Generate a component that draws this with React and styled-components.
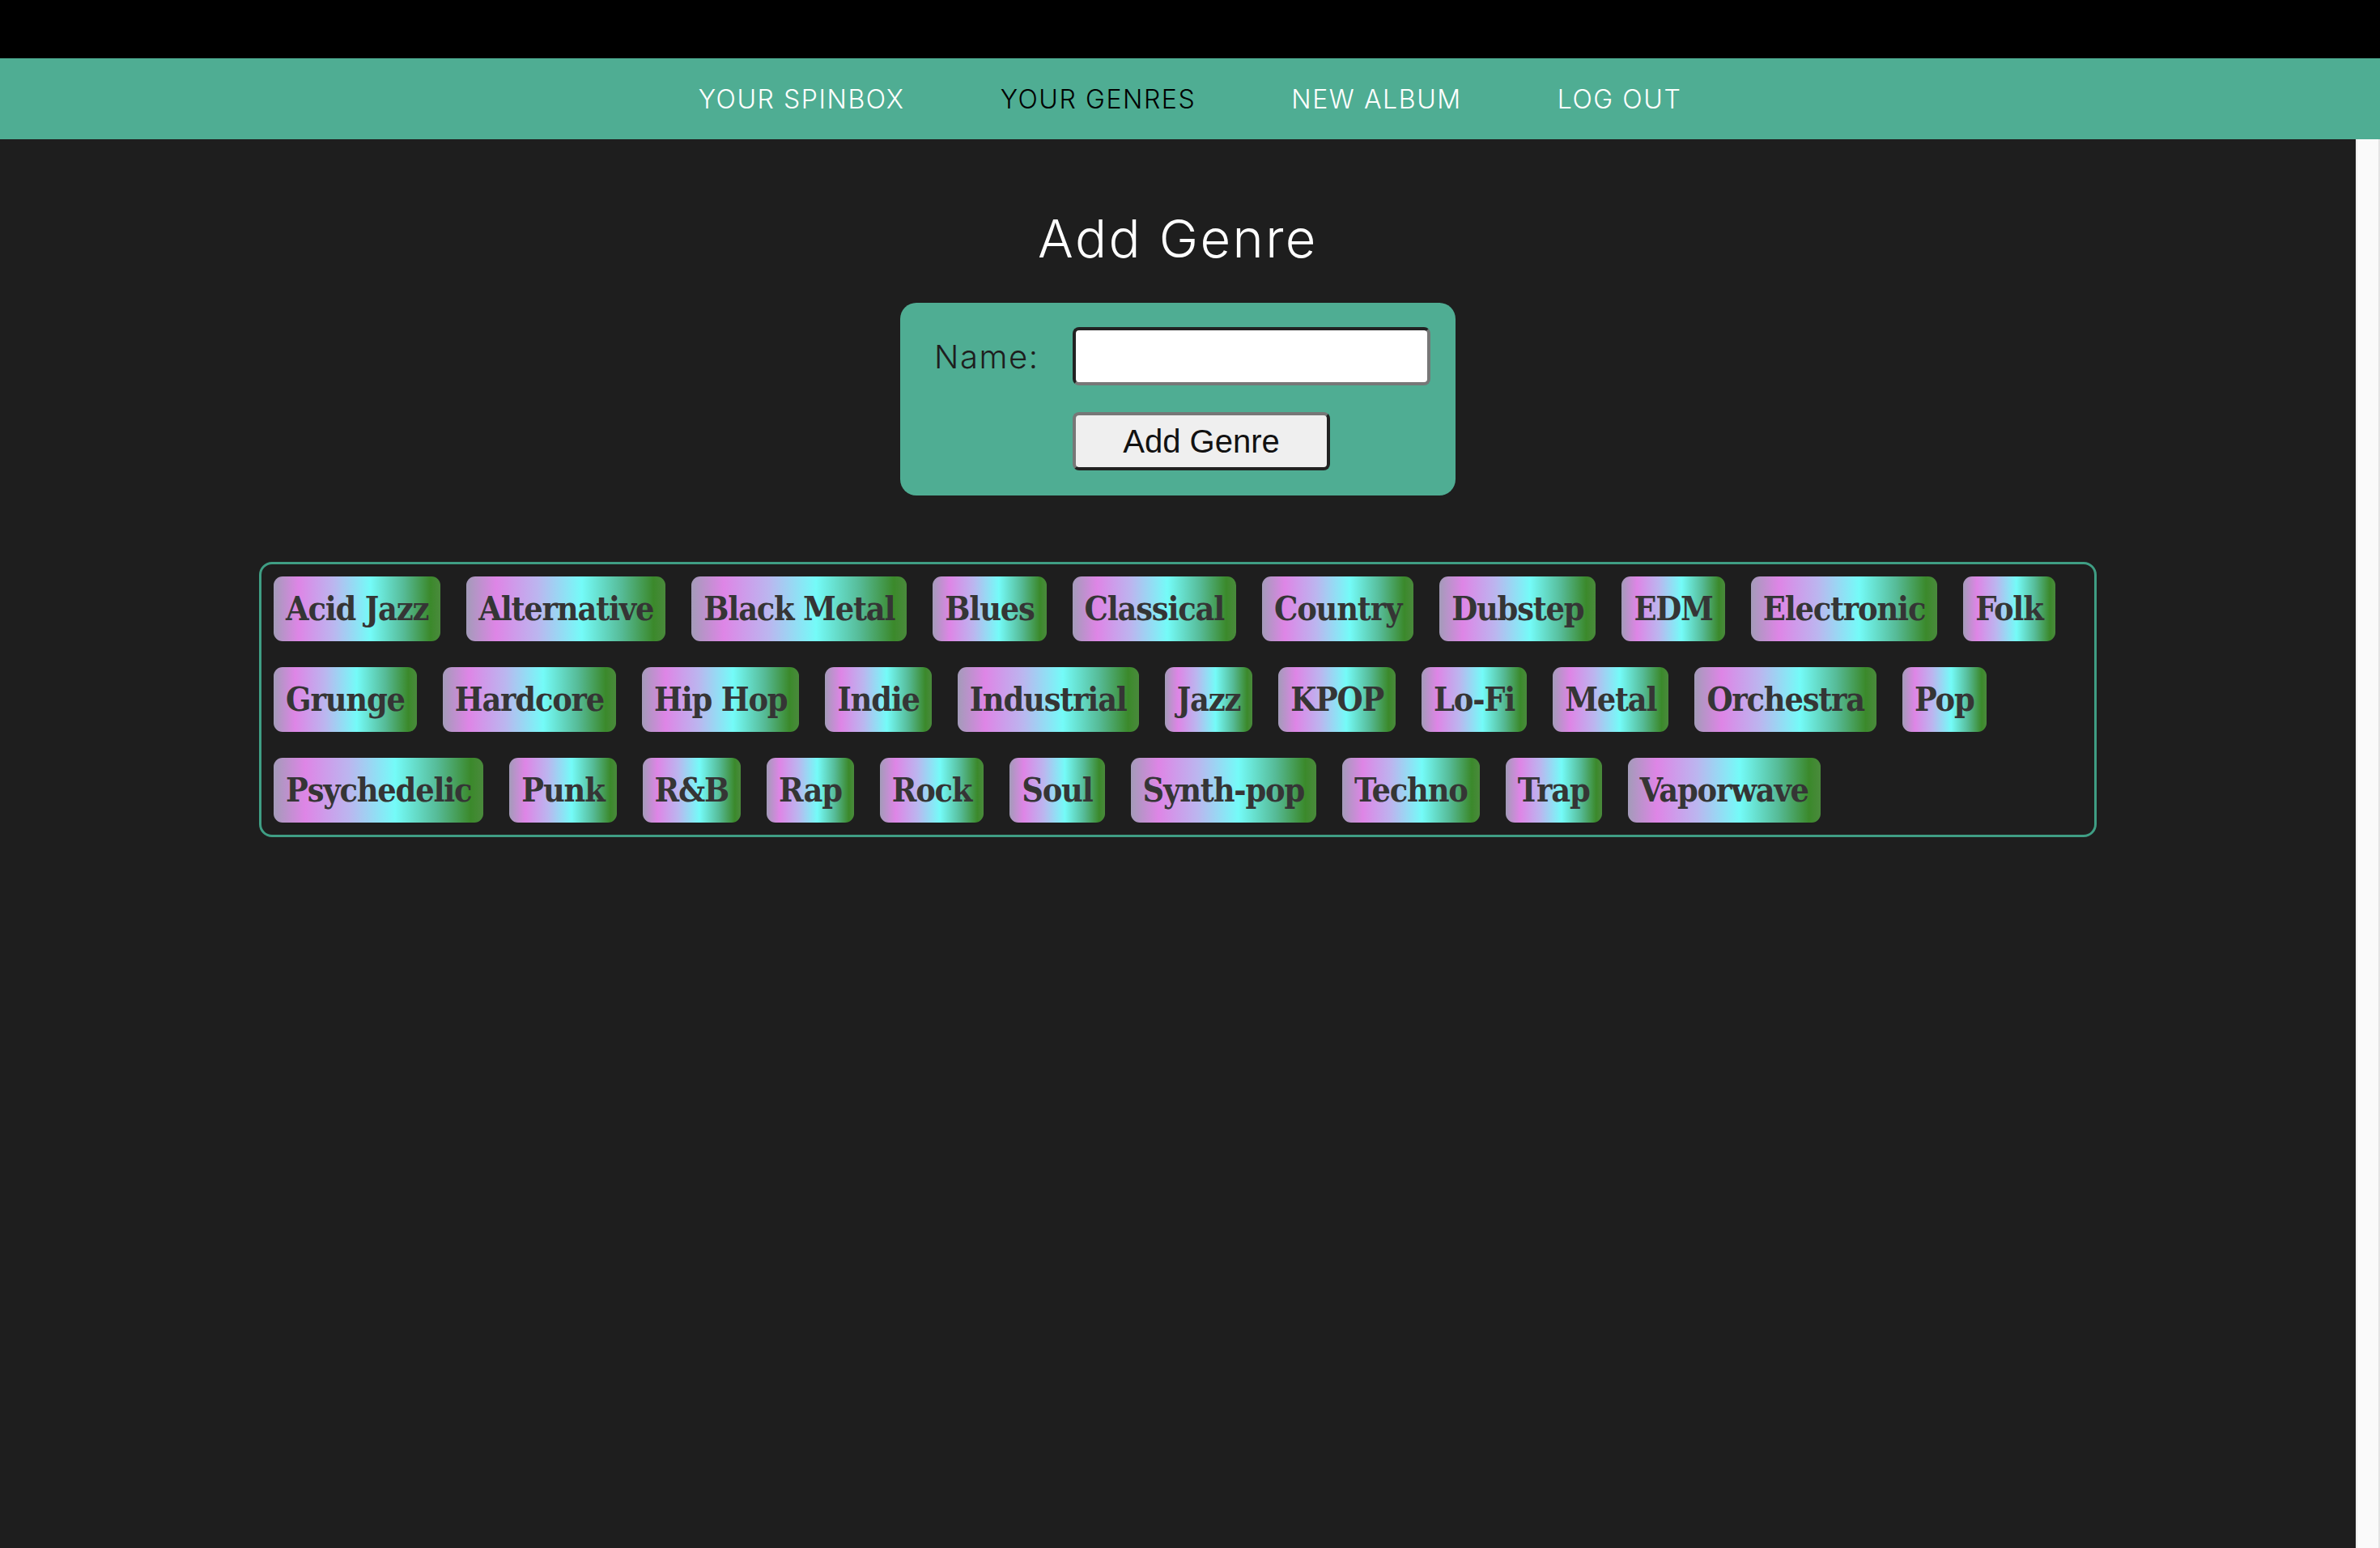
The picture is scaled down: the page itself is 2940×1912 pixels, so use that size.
import React from "react";
import styled, { createGlobalStyle } from "styled-components";

const Global = createGlobalStyle`
  html, body { margin: 0; padding: 0; background: #1e1e1e; }
  body { font-family: "Inter", "Liberation Sans", sans-serif; }
  * { box-sizing: border-box; }
`;

const Page = styled.div`
  display: flex;
  flex-direction: column;
  min-height: 100vh;
`;

const TopStrip = styled.div`
  height: 72px;
  background: #000;
`;

const Nav = styled.nav`
  height: 100px;
  background: #4fad93;
  display: flex;
  align-items: center;
  justify-content: center;
  gap: 118px;
`;

const NavLink = styled.a`
  font-family: "Inter", sans-serif;
  font-weight: 300;
  font-size: 32px;
  letter-spacing: 1.6px;
  text-transform: uppercase;
  color: ${(p) => (p.$active ? "#000" : "#fff")};
  text-decoration: none;
  cursor: pointer;
`;

const Body = styled.div`
  flex: 1;
  display: flex;
`;

const Main = styled.main`
  flex: 1;
  background: #1e1e1e;
  display: flex;
  flex-direction: column;
  align-items: center;
`;

const ScrollTrack = styled.div`
  width: 30px;
  background: #fafafa;
  border-left: 2px solid #ededed;
  border-right: 2px solid #e4e4e4;
`;

const Title = styled.h1`
  margin: 84px 0 40px;
  font-family: "Inter", sans-serif;
  font-weight: 300;
  font-size: 65px;
  letter-spacing: 2.4px;
  line-height: 78px;
  color: #fff;
`;

const FormBox = styled.form`
  width: 686px;
  height: 238px;
  background: #4fad93;
  border-radius: 20px;
  padding: 30px 31px 31px 42px;
  display: grid;
  grid-template-columns: 1fr 442px;
  row-gap: 33px;
  align-items: center;
`;

const Label = styled.label`
  font-family: "Inter", sans-serif;
  font-weight: 300;
  font-size: 40px;
  letter-spacing: 1.6px;
  color: #1e1e1e;
`;

const Input = styled.input`
  width: 442px;
  height: 72px;
  background: #fff;
  border-style: solid;
  border-width: 4px;
  border-color: #222 #777 #777 #222;
  border-radius: 8px;
  font-size: 36px;
  padding: 0 10px;
  outline: none;
`;

const Button = styled.button`
  grid-column: 2;
  justify-self: start;
  width: 318px;
  height: 72px;
  background: #efefef;
  border-style: solid;
  border-width: 4px;
  border-color: #777 #222 #222 #777;
  border-radius: 8px;
  font-family: "Liberation Sans", Arial, sans-serif;
  font-size: 40px;
  color: #111;
  cursor: pointer;
`;

const GenreBox = styled.section`
  width: 78%;
  margin-top: 82px;
  border: 3px solid #3f9e84;
  border-radius: 16px;
  padding: 15px;
  display: flex;
  flex-wrap: wrap;
  gap: 32px;
`;

const Chip = styled.span`
  display: inline-block;
  padding: 14px 15px;
  line-height: 52px;
  border-radius: 11px;
  background: linear-gradient(
    90deg,
    #a39bb9 0%,
    #de85e6 15%,
    #bbb6ef 36%,
    #74fbf8 58%,
    #56bb97 78%,
    #3b892b 94%,
    #4a8a3c 100%
  );
  font-family: "DejaVu Serif Condensed", "DejaVu Serif", serif;
  font-stretch: condensed;
  font-weight: 700;
  font-size: 41px;
  letter-spacing: -1.2px;
  color: #353535;
  white-space: nowrap;
`;

const links = [
  { label: "Your Spinbox" },
  { label: "Your Genres", active: true },
  { label: "New Album" },
  { label: "Log Out" },
];

const genres = [
  "Acid Jazz", "Alternative", "Black Metal", "Blues", "Classical", "Country",
  "Dubstep", "EDM", "Electronic", "Folk", "Grunge", "Hardcore", "Hip Hop",
  "Indie", "Industrial", "Jazz", "KPOP", "Lo-Fi", "Metal", "Orchestra", "Pop",
  "Psychedelic", "Punk", "R&B", "Rap", "Rock", "Soul", "Synth-pop", "Techno",
  "Trap", "Vaporwave",
];

export default function App() {
  return (
    <Page>
      <Global />
      <TopStrip />
      <Nav>
        {links.map((l) => (
          <NavLink key={l.label} $active={l.active}>
            {l.label}
          </NavLink>
        ))}
      </Nav>
      <Body>
        <Main>
          <Title>Add Genre</Title>
          <FormBox onSubmit={(e) => e.preventDefault()}>
            <Label htmlFor="name">Name:</Label>
            <Input id="name" type="text" />
            <Button type="submit">Add Genre</Button>
          </FormBox>
          <GenreBox>
            {genres.map((g) => (
              <Chip key={g}>{g}</Chip>
            ))}
          </GenreBox>
        </Main>
        <ScrollTrack />
      </Body>
    </Page>
  );
}
